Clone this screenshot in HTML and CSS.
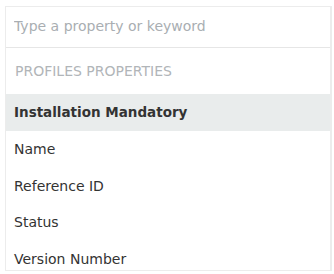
FILE: index.html
```html
<!DOCTYPE html>
<html lang="en">
<head>
    <meta charset="UTF-8">
    <meta name="viewport" content="width=device-width, initial-scale=1.0">
    <link rel="stylesheet" href="styles.css">
</head>
<body>
    <div class="picker">
        <div class="search">
            <input type="text" class="search-input" placeholder="Type a property or keyword">
        </div>
        <div class="list">
            <div class="section-title">PROFILES PROPERTIES</div>
            <div class="item selected">Installation Mandatory</div>
            <div class="item">Name</div>
            <div class="item">Reference ID</div>
            <div class="item">Status</div>
            <div class="item">Version Number</div>
        </div>
    </div>
</body>
</html>
```

FILE: styles.css
```css
body {
    margin: 0;
    padding: 6px 2px 3px 5px;
    background-color: #fff;
    font-family: "DejaVu Sans", "Noto Sans", sans-serif;
    font-size: 14px;
    color: #333;
}

.picker {
    height: 263px;
    border: 1px solid #ececec;
    border-right: 2px solid #ececec;
    background-color: #fff;
    overflow: hidden;
}

.search {
    height: 40px;
    border-bottom: 1px solid #e6e6e6;
}

.search-input {
    width: 100%;
    height: 38px;
    box-sizing: border-box;
    border: none;
    outline: none;
    padding: 0 8px;
    font-family: inherit;
    font-size: 14px;
    color: #333;
}

.search-input::placeholder {
    color: #a9aeb2;
}

.section-title {
    height: 46px;
    line-height: 46px;
    padding-left: 9px;
    color: #b1b5b8;
}

.item {
    height: 36.75px;
    line-height: 36.75px;
    padding-left: 8px;
    white-space: nowrap;
}

.item.selected {
    background-color: #e9ecec;
    font-size: 13.5px;
    font-weight: bold;
}
```
